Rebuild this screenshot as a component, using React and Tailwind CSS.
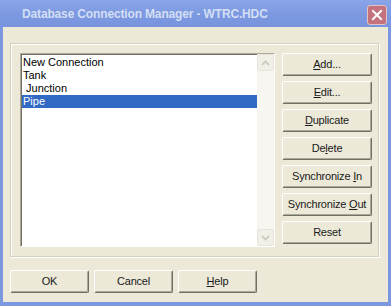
import React from "react";

const font = { fontFamily: '"Liberation Sans", Arial, sans-serif' };

function Btn({ children, w = "w-[90px]" }) {
  return (
    <div
      className={`${w} h-[23px] flex items-center justify-center text-[11px] tracking-[-0.2px] text-[#1a1a1a] bg-[#ece9d8] border border-t-[#ffffff] border-l-[#ffffff] border-r-[#716f64] border-b-[#716f64] rounded-[2px] shadow-[inset_-1px_-1px_0_#aca899]`}
    >
      <span className="whitespace-pre">{children}</span>
    </div>
  );
}

const U = ({ children }) => <span className="underline underline-offset-[1px]">{children}</span>;

export default function App() {
  return (
    <div className="w-[391px] h-[306px] bg-[#7b97e0] flex flex-col overflow-hidden" style={font}>
      <div className="h-[27px] shrink-0 flex items-center pl-[22px] pr-[4px] bg-gradient-to-b from-[#8aa5e8] via-[#7d99e1] to-[#7894de]">
        <span className="flex-1 text-[12px] tracking-[-0.15px] font-bold text-[#d3dff5] pt-[1px]">
          Database Connection Manager - WTRC.HDC
        </span>
        <div className="w-[20px] h-[20px] mt-[2px] rounded-[3px] border border-[#e3c2c8] bg-[#c4727d] flex items-center justify-center">
          <svg width="12" height="12" viewBox="0 0 12 12">
            <path d="M2 2 L10 10 M10 2 L2 10" stroke="#ffffff" strokeWidth="2" strokeLinecap="square" />
          </svg>
        </div>
      </div>
      <div className="flex-1 mx-[3px] mb-[4px] bg-[#ece9d8] flex flex-col">
        <div className="mt-[16px] ml-[7px] w-[369px] h-[214px] border border-[#d0d0bf] shadow-[1px_1px_0_#ffffff,inset_1px_1px_0_#ffffff] flex pl-[9px] pt-[9px] gap-[7px]">
          <div className="w-[255px] h-[194px] bg-white border border-t-[#aca899] border-l-[#aca899] border-r-[#ffffff] border-b-[#ffffff] flex">
            <div className="flex-1 border-t border-l border-t-[#716f64] border-l-[#716f64] pt-[1px] text-[11px] leading-[13px] text-black">
              <div className="pl-[1px] h-[13px]">New Connection</div>
              <div className="pl-[1px] h-[13px]">Tank</div>
              <div className="pl-[1px] h-[13px] whitespace-pre"> Junction</div>
              <div className="pl-[1px] h-[13px] bg-[#316ac5] text-white">Pipe</div>
            </div>
            <div className="w-[17px] bg-[#f7f6f0] flex flex-col justify-between">
              <div className="w-[17px] h-[17px] bg-[#f1efe6] border border-[#e6e4dc] rounded-[2px] flex items-center justify-center">
                <svg width="9" height="6" viewBox="0 0 9 6">
                  <path d="M1 5 L4.5 1.5 L8 5" stroke="#c9c7ba" strokeWidth="1.6" fill="none" />
                </svg>
              </div>
              <div className="w-[17px] h-[17px] bg-[#f1efe6] border border-[#e6e4dc] rounded-[2px] flex items-center justify-center">
                <svg width="9" height="6" viewBox="0 0 9 6">
                  <path d="M1 1 L4.5 4.5 L8 1" stroke="#c9c7ba" strokeWidth="1.6" fill="none" />
                </svg>
              </div>
            </div>
          </div>
          <div className="flex flex-col gap-[5px]">
            <Btn><U>A</U>dd...</Btn>
            <Btn><U>E</U>dit...</Btn>
            <Btn><U>D</U>uplicate</Btn>
            <Btn>De<U>l</U>ete</Btn>
            <Btn>Synchronize <U>I</U>n</Btn>
            <Btn>Synchronize <U>O</U>ut</Btn>
            <Btn>Reset</Btn>
          </div>
        </div>
        <div className="mt-[13px] ml-[7px] flex gap-[5px]">
          <Btn w="w-[79px]">OK</Btn>
          <Btn w="w-[79px]">Cancel</Btn>
          <Btn w="w-[79px]"><U>H</U>elp</Btn>
        </div>
      </div>
    </div>
  );
}
